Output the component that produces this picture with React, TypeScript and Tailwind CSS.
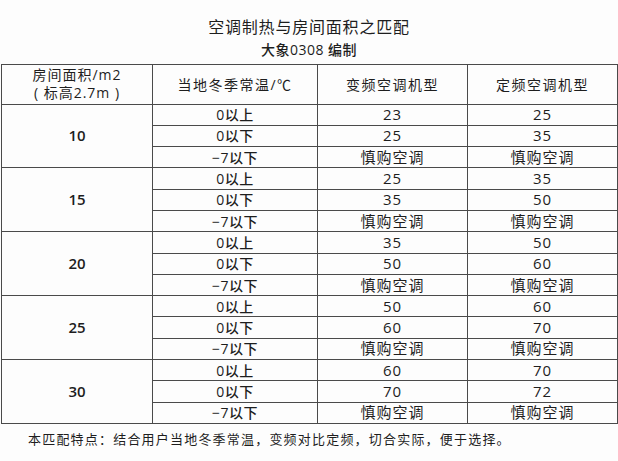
import React from "react";

const groups = [
  { area: "10", rows: [["0以上", "23", "25"], ["0以下", "25", "35"], ["−7以下", "慎购空调", "慎购空调"]] },
  { area: "15", rows: [["0以上", "25", "35"], ["0以下", "35", "50"], ["−7以下", "慎购空调", "慎购空调"]] },
  { area: "20", rows: [["0以上", "35", "50"], ["0以下", "50", "60"], ["−7以下", "慎购空调", "慎购空调"]] },
  { area: "25", rows: [["0以上", "50", "60"], ["0以下", "60", "70"], ["−7以下", "慎购空调", "慎购空调"]] },
  { area: "30", rows: [["0以上", "60", "70"], ["0以下", "70", "72"], ["−7以下", "慎购空调", "慎购空调"]] },
];

const cell = "border-[1.5px] border-[#4a4a4a] text-center p-0";

export default function App() {
  return (
    <div
      className="w-[618px] h-[461px] bg-[#fdfdfd] text-[#1e1e1e] overflow-hidden"
      style={{ fontFamily: '"Open Sans", "Noto Sans CJK SC", sans-serif' }}
    >
      <div className="h-[64px] flex flex-col items-center pt-[17px]">
        <h1 className="text-[16px] leading-[20px] tracking-[0.8px]">空调制热与房间面积之匹配</h1>
        <p className="text-[14px] leading-[18px] mt-[4px] font-medium tracking-[0.5px]">大象0308 编制</p>
      </div>
      <div className="pl-[1px]">
        <table className="border-collapse w-[616px] table-fixed text-[14px]">
          <colgroup>
            <col className="w-[151px]" />
            <col className="w-[165px]" />
            <col className="w-[150px]" />
            <col className="w-[150px]" />
          </colgroup>
          <thead>
            <tr className="h-[39.5px]">
              <th className={`${cell} font-normal leading-[18px] tracking-[1px]`}>
                房间面积/m2
                <br />
                ( 标高2.7m )
              </th>
              <th className={`${cell} font-normal tracking-[1.5px]`}>当地冬季常温/℃</th>
              <th className={`${cell} font-normal tracking-[1.5px]`}>变频空调机型</th>
              <th className={`${cell} font-normal tracking-[1.5px]`}>定频空调机型</th>
            </tr>
          </thead>
          <tbody>
            {groups.map((g) =>
              g.rows.map((r, i) => (
                <tr key={g.area + i} className="h-[21.3px] leading-[15px]">
                  {i === 0 && (
                    <td rowSpan={3} className={`${cell} font-semibold text-[15px]`}>
                      {g.area}
                    </td>
                  )}
                  <td className={`${cell} font-medium tracking-[0.5px]`}>{r[0]}</td>
                  <td className={`${cell} text-[15px] tracking-[1px]`}>{r[1]}</td>
                  <td className={`${cell} text-[15px] tracking-[1px]`}>{r[2]}</td>
                </tr>
              ))
            )}
          </tbody>
        </table>
      </div>
      <p className="pl-[28px] mt-[6px] text-[13px] leading-[18px] tracking-[1.2px]">
        本匹配特点：结合用户当地冬季常温，变频对比定频，切合实际，便于选择。
      </p>
    </div>
  );
}
